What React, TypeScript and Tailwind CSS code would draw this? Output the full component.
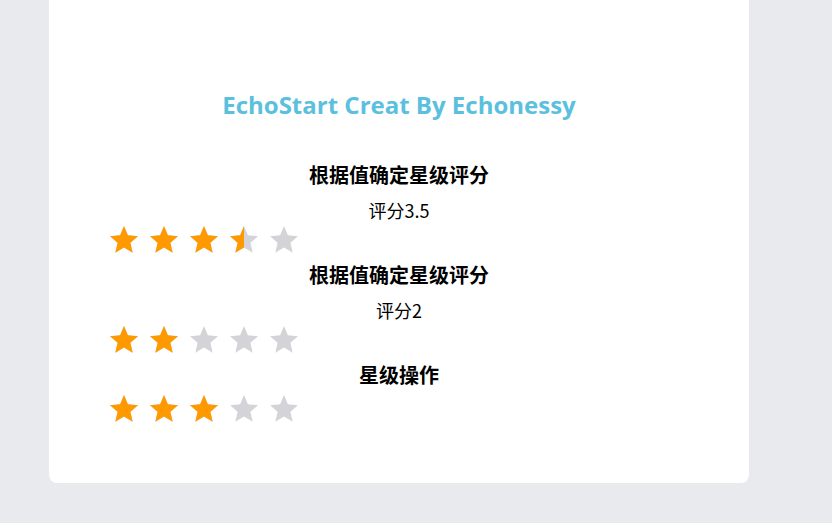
import React from "react";

const STAR = "M15 1 L18.9 10.3 L29 11.2 L21.4 17.8 L23.7 27.7 L15 22.5 L6.3 27.7 L8.6 17.8 L1 11.2 L11.1 10.3 Z";

function Star({ fill, id }: { fill: number; id: string }) {
  return (
    <svg width="30" height="29" viewBox="0 0 30 29" className="block">
      <defs>
        <clipPath id={id}>
          <rect x="0" y="0" width={30 * fill} height="29" />
        </clipPath>
      </defs>
      <path d={STAR} fill="#d4d4d8" />
      {fill > 0 && <path d={STAR} fill="#ff9900" clipPath={`url(#${id})`} />}
    </svg>
  );
}

function Stars({ value, name }: { value: number; name: string }) {
  return (
    <div className="flex gap-[10px] h-[30px] items-center">
      {[0, 1, 2, 3, 4].map((i) => {
        const f = Math.max(0, Math.min(1, value - i));
        return <Star key={i} fill={f} id={`${name}-${i}`} />;
      })}
    </div>
  );
}

export default function App() {
  const cjk = { fontFamily: '"Noto Sans CJK SC", "Noto Sans", sans-serif' };
  return (
    <div className="min-h-[523px] w-full bg-[#e9eaee] overflow-hidden">
      <div className="ml-[49px] -mt-[6px] w-[700px] bg-white rounded-[8px] pt-[95px] pb-[60px] pl-[60px] pr-[60px]">
        <div
          className="h-[32px] leading-[32px] text-center text-[24px] font-bold text-[#5bc0de]"
          style={{ fontFamily: '"Open Sans", "Noto Sans", sans-serif' }}
        >
          EchoStart Creat By Echonessy
        </div>
        <div className="mt-[39px] h-[30px] leading-[30px] text-center text-[20px] font-bold text-black" style={cjk}>
          根据值确定星级评分
        </div>
        <div className="mt-[8px] h-[24px] leading-[24px] text-center text-[18px] text-black" style={cjk}>
          评分3.5
        </div>
        <div className="mt-[2px]">
          <Stars value={3.5} name="a" />
        </div>
        <div className="mt-[6px] h-[30px] leading-[30px] text-center text-[20px] font-bold text-black" style={cjk}>
          根据值确定星级评分
        </div>
        <div className="mt-[8px] h-[24px] leading-[24px] text-center text-[18px] text-black" style={cjk}>
          评分2
        </div>
        <div className="mt-[2px]">
          <Stars value={2} name="b" />
        </div>
        <div className="mt-[6px] h-[30px] leading-[30px] text-center text-[20px] font-bold text-black" style={cjk}>
          星级操作
        </div>
        <div className="mt-[3px]">
          <Stars value={3} name="c" />
        </div>
      </div>
    </div>
  );
}
